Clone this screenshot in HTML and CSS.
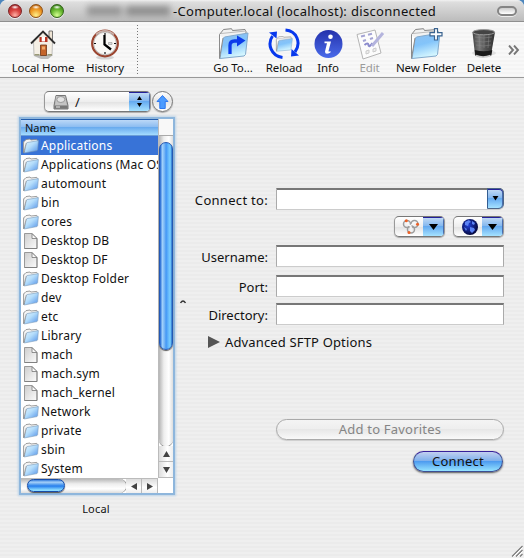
FILE: index.html
```html
<!DOCTYPE html>
<html lang="en">
<head>
<meta charset="utf-8">
<title>Computer.local</title>
<link rel="stylesheet" href="styles.css">
</head>
<body>
<svg class="defs" width="0" height="0" aria-hidden="true">
  <defs>
    <linearGradient id="blue" x1="0" y1="0" x2="1" y2="1"><stop offset="0" stop-color="#e4f4ff"/><stop offset=".45" stop-color="#b4ddfb"/><stop offset="1" stop-color="#4f8fe8"/></linearGradient>
    <linearGradient id="bigblue" x1="0" y1="0" x2=".3" y2="1"><stop offset="0" stop-color="#8dbff0"/><stop offset=".5" stop-color="#83c4fa"/><stop offset="1" stop-color="#d4f6ff"/></linearGradient>
    <linearGradient id="paper" x1="0" y1="0" x2="1" y2="1"><stop offset="0" stop-color="#cdcdcd"/><stop offset="1" stop-color="#fcfcfc"/></linearGradient>
    <linearGradient id="info" x1="0" y1="0" x2="0" y2="1"><stop offset="0" stop-color="#2431ab"/><stop offset="1" stop-color="#4a6bea"/></linearGradient>
    <linearGradient id="can" x1="0" y1="0" x2="1" y2="0"><stop offset="0" stop-color="#444"/><stop offset=".3" stop-color="#777"/><stop offset=".6" stop-color="#505050"/><stop offset="1" stop-color="#333"/></linearGradient>
    <radialGradient id="earth" cx=".4" cy=".4" r=".6"><stop offset="0" stop-color="#2040d8"/><stop offset="1" stop-color="#05083f"/></radialGradient>
    <symbol id="folder" viewBox="0 0 16 16">
      <path d="M.7 14.2V3.6L2 2.8l1-1.2 4-.6.8 1 6-.6.6 1.2v2z" fill="#f4f4f4" stroke="#888" stroke-width=".8"/>
      <path d="M1.200 15 3.2 5.4 4 4.6 15.4 2.6 14.6 11.8 14 12.6z" fill="url(#blue)" stroke="#7c9cba" stroke-width=".6"/>
      <path d="M.7 4v10.8L3.2 5" fill="#fff" stroke="#888" stroke-width=".7"/>
    </symbol>
    <symbol id="file" viewBox="0 0 16 16">
      <path d="M1.5.5H9l5 5v10H1.500z" fill="url(#paper)" stroke="#999"/>
      <path d="M1.500 15.500h12.500V5.500" fill="none" stroke="#777" stroke-width=".7"/>
      <path d="M9 .7v4.800h5z" fill="#f8f8f8" stroke="#777" stroke-width=".8"/>
    </symbol>
    <symbol id="bigfolder" viewBox="0 0 32 32">
      <path d="M2.500 28V6.500L4.500 4l2-2.500 8-.8L15.500 2.500 28 1.500l1 2V8z" fill="#f2f2f2" stroke="#858585"/>
      <path d="M4 5.500 29 3" stroke="#bbb" fill="none"/>
      <path d="M3 30.500 6 10.500 7.500 9 31 5 28.500 26.500 27 28z" fill="url(#bigblue)" stroke="#83aacc"/>
      <path d="M2.500 7V30.500L6 10" fill="#fff" stroke="#8b8b8b"/>
    </symbol>
  </defs>
</svg>
<div class="window">
  <header class="titlebar">
    <div class="lights"><i class="light red"></i><i class="light amber"></i><i class="light green"></i></div>
    <div class="title"><span class="redacted"><i></i><i></i></span><span class="caption">-Computer.local (localhost): disconnected</span></div>
    <i class="pill"></i>
  </header>

  <nav class="toolbar">
    <div class="tool w70">
      <svg width="32" height="32" viewBox="0 0 32 32"><path d="M7 28 14 31h7l5-4z" fill="#bbb"/><path d="M22 3h3.500v9.500L22 9z" fill="#eee4d4" stroke="#555" stroke-width=".8"/><path d="M6.500 13.500 16 4 25.500 13.500 25 27.500H7z" fill="#f4efe5" stroke="#999" stroke-width=".6"/><path d="M4 15.500 16 3.500 28 15.500" fill="none" stroke="#2e2e2e" stroke-width="1.900"/><path d="M12.500 9h8v5h-8z" fill="#b83422"/><path d="M14.700 9h3.300v4.500h-3.300z" fill="#fff"/><path d="M13.500 17h6v10.500h-6z" fill="#c4642a" stroke="#6d3514" stroke-width=".8"/><path d="M15 18.500h3v3h-3z" fill="#efaa6a"/><path d="M7.500 26h5v1.500h-5zM20.500 26h4.500v1.500h-4.500z" fill="#9a9a78"/></svg>
      <span>Local Home</span></div>
    <div class="tool w54">
      <svg width="32" height="32" viewBox="0 0 32 32"><ellipse cx="16" cy="29.500" rx="9" ry="2" fill="#d4d4d4"/><circle cx="16" cy="15.500" r="12.800" fill="#f9f8f5" stroke="#9b4530" stroke-width="2.300"/><path d="M7 6.500a13 13 0 0 1 18 0" fill="none" stroke="#c9b3ac" stroke-width="1.600"/><circle cx="16" cy="15.500" r="11.300" fill="none" stroke="#999" stroke-width=".6"/><path d="M16 5v2M5 15.500h2M16 24v2M25 15.500h2" stroke="#111" stroke-width="1.200"/><path d="M15.500 7v9.500L22 21.500" fill="none" stroke="#000" stroke-width="2.300"/><path d="M19.500 14.500h3.500v2h-3.500z" fill="#ddd" stroke="#999" stroke-width=".6"/></svg>
      <span>History</span></div>
    <i class="divider"></i>
    <div class="tool w54 goto">
      <svg width="32" height="32" viewBox="0 0 32 32"><use href="#bigfolder"/><path d="M13 26V17.500q0-4.500 4.500-4.500H21" fill="none" stroke="#0b3bea" stroke-width="3.300"/><path d="M20 7.500l8.500 5L20 18.500z" fill="#0b3bea"/></svg>
      <span>Go To...</span></div>
    <div class="tool w48">
      <svg width="32" height="32" viewBox="0 0 32 32"><svg x="7" y="8" width="18" height="16" viewBox="0 0 32 32" preserveAspectRatio="none"><use href="#bigfolder"/></svg><path d="M14.500 29.500C3 28 -1 16 4.500 8" fill="none" stroke="#0738ed" stroke-width="3"/><path d="M1 4.500 9 3.500 8.500 10.500z" fill="#0738ed"/><path d="M17.500 2C29 3 33.500 15 27 24" fill="none" stroke="#0738ed" stroke-width="3"/><path d="M31 27.500 23 28.500l.5-7.500z" fill="#0738ed"/></svg>
      <span>Reload</span></div>
    <div class="tool w40">
      <svg width="32" height="32" viewBox="0 0 32 32"><circle cx="16.500" cy="16" r="14" fill="url(#info)"/><circle cx="18.500" cy="8.700" r="2.300" fill="#fff"/><path d="M12.500 13.500h6.500L16.500 23q0 1 2 0v1.500q-5.500 3-5.500-1L15 15.300h-2.500z" fill="#fff"/></svg>
      <span>Info</span></div>
    <div class="tool w43 disabled">
      <svg width="32" height="32" viewBox="0 0 32 32"><path d="M3 6.500 21 2l6 23L9 31z" fill="#fcfcfc" stroke="#b5b5b5"/><path d="m7 8.500 4-1m3-.7 4-1M9 13l3-1m4-1 3-1" stroke="#a4a4d4" stroke-width="2"/><path d="M10.500 17q3.500-3 4 0t4-2" stroke="#8b8bcd" stroke-width="2" fill="none"/><path d="m12 23 3-1v3l-3 1zm7-2 3-1v3l-3 1z" fill="#eee" stroke="#ccc"/><path d="M29 5 18 18" stroke="#b4b4dd" stroke-width="3"/></svg>
      <span>Edit</span></div>
    <div class="tool w70">
      <svg width="34" height="32" viewBox="0 0 34 32"><svg width="32" height="32" viewBox="0 0 32 32"><use href="#bigfolder"/></svg><path d="M25.500.6h3v4h4.500v3.300h-4.500V12h-3V7.900H21V4.600h4.500z" fill="#fff" stroke="#3a638f" stroke-width="1.200"/></svg>
      <span>New Folder</span></div>
    <div class="tool w46">
      <svg width="32" height="32" viewBox="0 0 32 32"><ellipse cx="16" cy="25" rx="12" ry="3" fill="#dedede"/><path d="M4.500 4 7 27q8 4.500 16 0L27 4z" fill="url(#can)"/><path d="M6.800 22q9 2.500 17.500 0l-1 5.500q-8 3-16 0z" fill="#191919"/><path d="M8 27.500q7 3 14.500 0" stroke="#ccc" stroke-width="1.500" fill="none"/><ellipse cx="15.700" cy="4.200" rx="11" ry="2.600" fill="#444" stroke="#999"/><path d="M7 9q8 2 17 0M7 13q8 2 16 0M8 17q7 2 15 0M11 7l1 13m4-13v13m5-13-1 13" stroke="#888" stroke-width=".5" fill="none"/></svg>
      <span>Delete</span></div>
    <svg class="more" width="12" height="10" viewBox="0 0 12 10"><path d="m1 .5 4 4.500-4 4.500m5-9L10 5 6 9.500" fill="none" stroke="#777" stroke-width="1.900"/></svg>
  </nav>

  <main class="content">
    <section class="browser">
      <div class="pathrow">
        <div class="popup path">
          <svg width="18" height="16" viewBox="0 0 18 16"><path d="M4 1.500h9.500l2.500 10v3.500H2v-3.500z" fill="#999" stroke="#777"/><path d="M4 2h9l2 9H3z" fill="#c4c4c4"/><ellipse cx="8.800" cy="5.500" rx="4" ry="3" fill="#e4e4e4" stroke="#999"/><path d="M2.500 12h13v2.500h-13z" fill="#777"/><path d="M4 13h4" stroke="#eee"/></svg>
          <span>/</span>
          <b class="cap wide"><svg width="5" height="13" viewBox="0 0 5 13"><path d="M2.500 1 5 5H0zM2.500 12 0 8h5z"/></svg></b>
        </div>
        <div class="up"><svg width="13" height="14" viewBox="0 0 13 14"><path d="M6.500.5 12 6.500H9.200v7H3.800v-7H1z" fill="#4b9bff" stroke="#2f78ee"/></svg></div>
      </div>
      <div class="listing">
        <div class="files">
          <div class="colhead">Name</div>
          <div class="row selected"><svg><use href="#folder"/></svg><span>Applications</span></div>
          <div class="row"><svg><use href="#folder"/></svg><span>Applications (Mac OS 9)</span></div>
          <div class="row"><svg><use href="#folder"/></svg><span>automount</span></div>
          <div class="row"><svg><use href="#folder"/></svg><span>bin</span></div>
          <div class="row"><svg><use href="#folder"/></svg><span>cores</span></div>
          <div class="row"><svg><use href="#file"/></svg><span>Desktop DB</span></div>
          <div class="row"><svg><use href="#file"/></svg><span>Desktop DF</span></div>
          <div class="row"><svg><use href="#folder"/></svg><span>Desktop Folder</span></div>
          <div class="row"><svg><use href="#folder"/></svg><span>dev</span></div>
          <div class="row"><svg><use href="#folder"/></svg><span>etc</span></div>
          <div class="row"><svg><use href="#folder"/></svg><span>Library</span></div>
          <div class="row"><svg><use href="#file"/></svg><span>mach</span></div>
          <div class="row"><svg><use href="#file"/></svg><span>mach.sym</span></div>
          <div class="row"><svg><use href="#file"/></svg><span>mach_kernel</span></div>
          <div class="row"><svg><use href="#folder"/></svg><span>Network</span></div>
          <div class="row"><svg><use href="#folder"/></svg><span>private</span></div>
          <div class="row"><svg><use href="#folder"/></svg><span>sbin</span></div>
          <div class="row"><svg><use href="#folder"/></svg><span>System</span></div>
        </div>
        <div class="vscroll">
          <div class="corner"></div>
          <div class="vtrack"><div class="vthumb"></div></div>
          <div class="vbtn"><svg width="7" height="6" viewBox="0 0 6 6" preserveAspectRatio="none"><path d="M3 0 6 6H0z"/></svg></div>
          <div class="vbtn"><svg width="7" height="6" viewBox="0 0 6 6" preserveAspectRatio="none"><path d="M0 0h6L3 6z"/></svg></div>
        </div>
        <div class="hscroll">
          <div class="htrack"><div class="hthumb"></div></div>
          <div class="hbtn"><svg width="6" height="7" viewBox="0 0 6 6" preserveAspectRatio="none"><path d="M6 0v6L0 3z"/></svg></div>
          <div class="hbtn"><svg width="6" height="7" viewBox="0 0 6 6" preserveAspectRatio="none"><path d="M0 0v6l6-3z"/></svg></div>
        </div>
      </div>
      <div class="place">Local</div>
    </section>

    <div class="splitter"><svg width="6" height="4" viewBox="0 0 6 4"><path d="M.5 3Q3-1 5.500 3" fill="none" stroke="#333" stroke-width="1.400"/></svg></div>

    <section class="form">
      <div class="field connect-to"><label>Connect to:</label><div class="input combo"><b class="cap"><svg width="7" height="5" viewBox="0 0 8 6"><path d="M.5 0h7L4 5.500z"/></svg></b></div></div>
      <div class="menus">
        <div class="popup small"><svg width="18" height="16" viewBox="0 0 18 16"><g fill="none" stroke="#9d9d9d" stroke-width="1.500"><circle cx="5" cy="5" r="3.500"/><circle cx="12.500" cy="5" r="3.500"/><circle cx="9" cy="10.500" r="3.500"/></g><path d="m4 3 4 4 5-4M9 7v5" stroke="#f8f8f8" stroke-width="1.300" fill="none"/><g fill="#ed6025"><circle cx="4.300" cy="1.800" r="1.500"/><circle cx="15.500" cy="5.300" r="1.500"/><circle cx="7" cy="13.500" r="1.500"/></g></svg><b class="cap menu"><svg width="9" height="6" viewBox="0 0 9 6"><path d="M0 0h9L4.500 6z"/></svg></b></div>
        <div class="popup small"><svg width="18" height="18" viewBox="0 0 18 18"><circle cx="9" cy="9" r="8" fill="url(#earth)"/><path d="m4 4 4-2 2 2-2 1-1 3-3-1zM11 3l3 2-1 2-2-1zM9 9l4 1 1 2-3 3-2-2zM3 9l3 2-1 2z" fill="#5b82f4"/></svg><b class="cap menu"><svg width="9" height="6" viewBox="0 0 9 6"><path d="M0 0h9L4.500 6z"/></svg></b></div>
      </div>
      <div class="field username"><label>Username:</label><div class="input"></div></div>
      <div class="field port"><label>Port:</label><div class="input"></div></div>
      <div class="field directory"><label>Directory:</label><div class="input"></div></div>
      <div class="advanced"><svg width="12" height="12" viewBox="0 0 12 12"><path d="M0 0 12 6 0 12z" fill="#555"/></svg><span>Advanced SFTP Options</span></div>
      <div class="button favorites"><span>Add to Favorites</span></div>
      <div class="button connect"><span>Connect</span></div>
    </section>
    <svg class="grip" width="12" height="12" viewBox="0 0 12 12"><path d="M1 11.500 11.500 1M5 11.500 11.500 5M9 11.500 11.500 9" stroke="#777" stroke-width="1.100"/><path d="M2.500 11.500 11.500 2.500M6.500 11.500 11.500 6.500" stroke="#fff"/></svg>
  </main>
</div>
</body>
</html>
```
FILE: styles.css
```css
* { box-sizing: border-box; }
body { margin: 0; background: #4d86bd; font: 13px/16px "Noto Sans", "Open Sans", sans-serif; color: #111; }
.defs { position: absolute; }
svg { display: block; flex: none; }
.window { width: 524px; height: 558px; display: flex; flex-direction: column; overflow: hidden; border-radius: 7px 7px 0 0; background: repeating-linear-gradient(#efefef 0 2px, #ebebeb 2px 4px); }

.titlebar { height: 22px; flex: none; display: flex; align-items: center; border-bottom: 1px solid #8f8f8f; background: linear-gradient(#f2f2f2 0, #dedede 10%, #cfcfcf 50%, #bcbcbc 100%); }
.lights { display: flex; gap: 7px; padding-left: 8px; width: 84px; }
.light { width: 14px; height: 14px; border-radius: 50%; border: 1px solid #555; box-shadow: 0 1px 0 #eee; }
.red { background: radial-gradient(ellipse 4px 2px at 50% 18%, #fff, transparent), radial-gradient(circle at 50% 85%, #ffb0a5, #d94440 45%, #94191b); border-color: #792325; }
.amber { background: radial-gradient(ellipse 4px 2px at 50% 18%, #fff, transparent), radial-gradient(circle at 50% 85%, #fff08a, #ef9a25 50%, #ab540b); border-color: #8f5013; }
.green { background: radial-gradient(ellipse 4px 2px at 50% 18%, #fff, transparent), radial-gradient(circle at 50% 85%, #d5ff92, #65b62e 50%, #276b10); border-color: #326318; }
.title { display: flex; align-items: center; flex: 1; }
.redacted { display: flex; gap: 4px; width: 89px; padding-left: 3px; filter: blur(3px); }
.redacted i { height: 10px; width: 35px; background: #979797; }
.redacted i + i { width: 44px; background: #8f8f8f; }
.caption { font-size: 13px; white-space: nowrap; letter-spacing: .33px; }
.pill { width: 20px; height: 10px; margin-right: 7px; border: 2px solid #858585; border-radius: 5px; background: linear-gradient(#ccc, #fff); box-shadow: 0 1px 0 #eee; }

.toolbar { height: 56px; flex: none; display: flex; align-items: flex-start; padding: 6px 0 0 8px; border-bottom: 1px solid #999; background: repeating-linear-gradient(#f8f8f8 0 2px, #f4f4f4 2px 4px); }
.tool { display: flex; flex-direction: column; align-items: center; white-space: nowrap; font-size: 11.5px; line-height: 16px; letter-spacing: -.1px; }
.disabled { color: #9b9b9b; }
.w70 { width: 70px; } .w54 { width: 54px; } .w48 { width: 48px; } .w40 { width: 40px; } .w43 { width: 43px; } .w46 { width: 46px; }
.divider { width: 1px; height: 49px; margin: -3px 0 0 5px; background: repeating-linear-gradient(#777 0 1px, transparent 1px 3px); }
.goto { margin-left: 68px; }
.more { margin: 17px 0 0 1px; }

.content { position: relative; flex: 1; display: flex; }
.browser { width: 156px; margin-left: 19px; padding-top: 13px; }
.pathrow { display: flex; align-items: center; height: 21px; padding-left: 25px; gap: 1px; }
.popup { display: flex; align-items: center; height: 21px; border: 1px solid #999; border-top-color: #777; border-bottom-color: #777; border-radius: 5px; overflow: hidden; background: linear-gradient(#fff, #eee 50%, #e2e2e2 52%, #fff); box-shadow: 0 1px 1px #aaa; }
.path { width: 107px; padding-left: 7px; }
.path span { margin-left: 5px; font-size: 13px; }
.cap { display: flex; align-items: center; justify-content: center; width: 17px; align-self: stretch; margin-left: auto; background: linear-gradient(#c6dcf4, #83b7ef 48%, #65aaf0 50%, #a5e2ff); box-shadow: inset 0 1px #23209a, inset -1px 0 #486cad; }
.wide { width: 21px; }
.menu { width: 21px; }
.up { width: 21px; height: 21px; display: flex; align-items: center; justify-content: center; border: 1px solid #777; border-radius: 50%; background: linear-gradient(#fff, #e4e4e4 50%, #fff); box-shadow: 0 1px 1px #aaa; }

.listing { display: grid; grid-template: 359px 15px / 137px 15px; width: 152px; margin: 7px 0 0 2px; background: #fff; box-shadow: 0 0 0 2px #8eb6dc, 0 0 2px 3px #bcd3e8; }
.files { overflow: hidden; font-size: 12px; }
.colhead { height: 17px; padding-left: 4px; line-height: 15px; font-size: 11px; border-top: 1px solid #225dad; border-bottom: 1px solid #6b9ed7; background: linear-gradient(#bcd8f7, #8dbdf1 45%, #6aabee 50%, #a4dcff); }
.row { display: flex; align-items: center; height: 19px; padding-left: 2px; white-space: nowrap; }
.row svg { width: 16px; height: 16px; margin-right: 2px; }
.row span { letter-spacing: .2px; }
.selected { background: #3873d7; color: #fff; }
.vscroll { display: flex; flex-direction: column; border-left: 1px solid #bbb; }
.corner { height: 17px; flex: none; background: #f8f8f8; border-bottom: 1px solid #aaa; }
.vtrack { height: 310px; flex: none; padding-top: 6px; background: linear-gradient(90deg, #b5b5b5, #eee 35%, #fff 70%, #ddd); border-radius: 0 0 7px 7px; box-shadow: 0 1px #888; }
.vthumb { height: 208px; border-radius: 7px; border: 1px solid #2458b2; background: linear-gradient(90deg, #1c62d0, #a1d1fb 20%, #69adf4 42%, #4296f5 50%, #69bcfd 72%, #79d1ff 85%, #286fcb); box-shadow: 0 1px 1px #555; }
.vbtn, .hbtn { display: flex; align-items: center; justify-content: center; background: linear-gradient(90deg, #ddd, #fff 60%, #eee); fill: #444; }
.vbtn { height: 16px; border-bottom: 1px solid #bbb; }
.hscroll { grid-column: 1; display: flex; border-top: 1px solid #bbb; }
.htrack { width: 105px; padding-left: 6px; background: linear-gradient(#b9b9b9, #eee 35%, #fff 70%, #ddd); border-radius: 0 7px 7px 0; box-shadow: 1px 0 #888; }
.hthumb { width: 38px; height: 13px; border-radius: 7px; border: 1px solid #164ca9; background: linear-gradient(#357cdb, #a5d0f8 20%, #4a96ee 45%, #267eed 55%, #8adbff 90%); box-shadow: 0 1px 1px #555; }
.hbtn { width: 16px; border-right: 1px solid #bbb; background: linear-gradient(#ddd, #fff 60%, #eee); }
.place { margin-top: 9px; text-align: center; font-size: 11px; line-height: 14px; padding-right: 2px; letter-spacing: .2px; }

.splitter { padding-top: 222px; width: 13px; padding-left: 5px; }
.form { width: 316px; padding-top: 110px; }
.field { display: flex; align-items: center; justify-content: flex-end; gap: 8px; height: 22px; }
.field label { padding-top: 1px; }
.connect-to label { letter-spacing: .3px; }
.input { width: 228px; height: 22px; display: flex; background: #fff; border: 1px solid #aaa; border-top: 2px solid #777; border-bottom-color: #ccc; }
.combo { border-right: 0; border-radius: 0 5px 5px 0; }
.combo .cap { height: 21px; margin-top: -2px; border: 1px solid #4c6687; border-left-color: #335d91; border-radius: 0 5px 5px 0; align-self: flex-start; }
.menus { display: flex; justify-content: flex-end; gap: 8px; margin-top: 6px; }
.small { width: 51px; padding-left: 7px; }
.username { margin-top: 8px; }
.port { margin-top: 8px; }
.directory { margin-top: 6px; }
.advanced { display: flex; align-items: center; gap: 5px; margin: 9px 0 0 20px; height: 16px; white-space: nowrap; letter-spacing: .15px; }
.button { display: flex; align-items: center; justify-content: center; height: 21px; margin-left: auto; border-radius: 11px; }
.favorites { width: 228px; margin-top: 69px; color: #858585; letter-spacing: .2px; border: 1px solid #aaa; background: linear-gradient(#f4f4f4, #eee 48%, #e7e7e7 50%, #f9f9f9); box-shadow: 0 1px 1px #ccc; }
.button span { margin-top: -2px; }
.connect { width: 90px; margin: 11px 1px 0 auto; letter-spacing: .2px; border: 1px solid #3b4e93; border-top-color: #37219a; background: linear-gradient(#c2cff0, #81b1ec 45%, #4e9cf0 50%, #95e3ff); box-shadow: 0 1px 2px #555; }
.grip { position: absolute; right: 1px; bottom: 1px; }
```
